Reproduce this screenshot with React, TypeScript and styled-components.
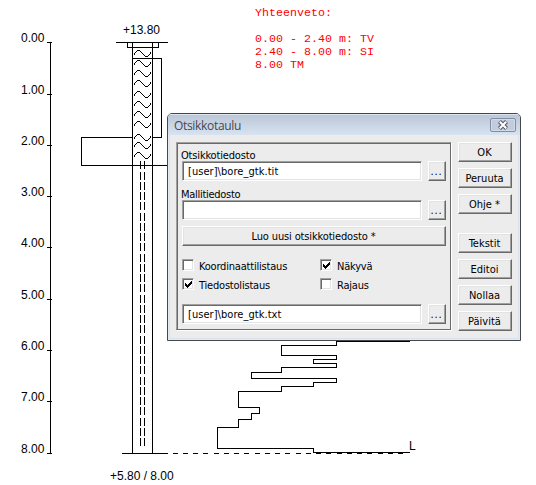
import React from "react";
import styled, { createGlobalStyle } from "styled-components";

const GlobalStyle = createGlobalStyle`
  *, *::before, *::after { box-sizing: border-box; }
  body { margin: 0; background: #fff; overflow: hidden; }
`;

const Workspace = styled.main`
  position: relative;
  width: 536px;
  height: 485px;
  background: #fff;
  overflow: hidden;
`;

const Drawing = styled.svg`
  display: block;
  font: 12px "Liberation Sans", Arial, sans-serif;
  fill: #000;
`;

const Lines = styled.g`
  fill: none;
  stroke: #000;
  stroke-width: 1;
  shape-rendering: crispEdges;
`;

const Summary = styled.div`
  position: absolute;
  left: 255px;
  top: 7px;
  font: 11.67px/13px "Liberation Mono", "Courier New", monospace;
  color: #f00;
  white-space: pre;
`;

const SummaryTitle = styled.div`
  margin-bottom: 13px;
`;

const Dialog = styled.section`
  position: absolute;
  left: 167px;
  top: 113px;
  width: 354px;
  height: 228px;
  border: 1px solid #46464c;
  border-radius: 5px 5px 0 0;
  background: #ececec;
  box-shadow: inset 0 0 0 1px #e6ebf2, inset 0 0 0 2px #d7e2f0;
  font: 11px "DejaVu Sans Condensed", "DejaVu Sans", Tahoma, sans-serif;
  font-stretch: condensed;
  color: #000;
  overflow: hidden;
`;

const TitleBar = styled.header`
  display: flex;
  justify-content: space-between;
  height: 21px;
  padding: 0 4px 0 6px;
  background: linear-gradient(#bac6d5, #d7e3f1);
  box-shadow: inset 0 1px 0 #dce4ee;
`;

const Title = styled.h1`
  margin: 0;
  font: 12px/23px "Open Sans", "Noto Sans", sans-serif;
  letter-spacing: -0.32px;
  color: #45484e;
`;

const CloseButton = styled.button`
  display: grid;
  place-items: center;
  width: 26px;
  height: 14px;
  margin-top: 4px;
  padding: 0;
  border: 1px solid #838ba6;
  border-radius: 2px;
  background: #c1cddd;
  box-shadow: inset 0 0 0 1px #d2dce8;
`;

const Body = styled.div`
  display: flex;
  gap: 7px;
  padding: 7px 8px 0;
`;

const sunken = `
  border: 1px solid;
  border-color: #a0a0a0 #fff #fff #a0a0a0;
  box-shadow: inset 1px 1px 0 #696969, inset -1px -1px 0 #e3e3e3;
`;

const Panel = styled.div`
  display: flex;
  flex-direction: column;
  width: 275px;
  height: 188px;
  padding: 5px 4px 0 5px;
  border: 1px solid;
  border-color: #a0a0a0 #696969 #696969 #a0a0a0;
  box-shadow: inset 1px 1px 0 #696969, 1px 1px 0 #fff;
`;

const FieldLabel = styled.label<{ $spacing?: number }>`
  height: 13px;
  line-height: 15px;
  letter-spacing: ${(p) => p.$spacing ?? -0.17}px;
  margin-left: -1px;
`;

const FieldRow = styled.div<{ $after: number }>`
  display: flex;
  justify-content: space-between;
  height: 20px;
  margin-bottom: ${(p) => p.$after}px;
`;

const PathInput = styled.input`
  width: 240px;
  height: 20px;
  padding: 1px 4px 0 5px;
  ${sunken}
  border-radius: 0;
  outline: 0;
  background: #fff;
  font: inherit;
  letter-spacing: 0.05px;
  color: #000;
`;

const PushButton = styled.button<{ $width: number; $top?: number; $spacing?: number }>`
  display: block;
  flex: none;
  width: ${(p) => p.$width}px;
  height: 20px;
  margin: ${(p) => p.$top ?? 0}px 0 0;
  padding: 2px 1px 0 0;
  border: 1px solid;
  border-color: #fff #696969 #696969 #fff;
  box-shadow: inset -1px -1px 0 #a0a0a0, inset 1px 1px 0 #e3e3e3;
  background: #ececec;
  font: inherit;
  line-height: 16px;
  letter-spacing: ${(p) => p.$spacing ?? 0}px;
  color: #000;
  text-align: center;
  white-space: nowrap;
`;

const Options = styled.div`
  display: grid;
  grid-template-columns: 138px 1fr;
  grid-auto-rows: 19px;
  margin: 13px 0 7px;
  height: 38px;
`;

const Option = styled.label`
  display: flex;
  gap: 5px;
  line-height: 16px;
  letter-spacing: -0.2px;
`;

const CheckMark = styled.span`
  width: 12px;
  height: 12px;
  ${sunken}
  background: #fff;

  svg { display: block; }
`;

const Actions = styled.div`
  display: flex;
  flex-direction: column;
  gap: 6px;
  width: 54px;
`;

type Point = [number, number];

const toPath = (points: Point[]) =>
  points.map(([x, y], i) => `${i ? "L" : "M"}${x + 0.5} ${y + 0.5}`).join("");

const ticks = [42, 94, 145, 196, 247, 299, 350, 401, 453];
const waves = [53, 63, 73, 83, 94, 104, 114, 124, 137, 145, 155];
const siltDashes = Array.from({ length: 28 }, (_, i) => Math.round(161.3 + i * 10.25));
const baseDashes = Array.from({ length: 23 }, (_, i) => Math.round(172.7 + i * 10.24));

// One wave of the peat hatch as horizontal runs: x, offset from the centre, length.
const waveRuns = [
  [134, 1, 1], [134, 0, 1], [135, -1, 1], [136, -2, 1], [137, -3, 3],
  [140, -2, 1], [141, -1, 1], [142, 0, 1], [143, 1, 1], [144, 2, 1],
  [145, 3, 3], [148, 2, 1], [149, 1, 1], [150, 0, 1], [150, -1, 1],
];

const wavePath = (y: number) =>
  waveRuns.map(([x, dy, length]) => `M${x} ${y + dy + 0.5}h${length}`).join("");

const resistance: Point[] = [
  [409, 341], [336, 341], [336, 345], [281, 345], [281, 355], [336, 355],
  [336, 359], [313, 359], [313, 363], [336, 363], [336, 367], [281, 367],
  [281, 372], [251, 372], [251, 378], [336, 378], [336, 382], [313, 382],
  [313, 386], [281, 386], [281, 391], [238, 391], [238, 407], [259, 407],
  [259, 413], [251, 413], [251, 419], [238, 419], [238, 427], [217, 427],
  [217, 448], [313, 448], [313, 452], [409, 452],
];

function BoreDrawing() {
  return (
    <Drawing width="536" height="485" viewBox="0 0 536 485">
      <Lines>
        <path d="M50.5 42V454" />
        {ticks.map((y) => <path key={y} d={`M47 ${y + 0.5}H52`} />)}
        <path d="M116 42.5H168M127.5 42V47.5H158.5V42" />
        <path d="M132.5 42V453M152.5 42V453M122 453.5H168" />
        <path d="M132 58.5H161.5V137.5H152M132 137.5H81.5V165.5H168" />
        {siltDashes.map((y) => <path key={y} d={`M140.5 ${y}v8M144.5 ${y}v8`} />)}
        {baseDashes.map((x) => <path key={x} d={`M${x} 453.5h5`} />)}
        <path d={toPath(resistance)} />
        {waves.map((y) => <path key={y} d={wavePath(y)} />)}
      </Lines>
      {ticks.map((y, i) => <text key={y} x="21" y={y}>{`${i}.00`}</text>)}
      <text x="123" y="34">+13.80</text>
      <text x="110" y="480">+5.80 / 8.00</text>
      <text x="409" y="450">L</text>
    </Drawing>
  );
}

function Check({ label, on = false }: { label: string; on?: boolean }) {
  return (
    <Option>
      <CheckMark>
        {on && (
          <svg width="10" height="10" viewBox="0 0 10 10">
            <path d="M2 4V7L4 9L9 4V1L4 6Z" fill="#000" shapeRendering="crispEdges" />
          </svg>
        )}
      </CheckMark>
      {label}
    </Option>
  );
}

export default function App() {
  return (
    <Workspace>
      <GlobalStyle />
      <BoreDrawing />
      <Summary>
        <SummaryTitle>Yhteenveto:</SummaryTitle>
        <div>0.00 - 2.40 m: TV</div>
        <div>2.40 - 8.00 m: SI</div>
        <div>8.00 TM</div>
      </Summary>
      <Dialog>
        <TitleBar>
          <Title>Otsikkotaulu</Title>
          <CloseButton aria-label="Sulje">
            <svg width="12" height="10" viewBox="0 0 12 10">
              <path d="M2.5 1.5L9.5 8.5M9.5 1.5L2.5 8.5" stroke="#50545f" strokeWidth="4.2" />
              <path d="M2.8 1.8L9.2 8.2M9.2 1.8L2.8 8.2" stroke="#fff" strokeWidth="2.2" />
            </svg>
          </CloseButton>
        </TitleBar>
        <Body>
          <Panel>
            <FieldLabel>Otsikkotiedosto</FieldLabel>
            <FieldRow $after={6}>
              <PathInput defaultValue="[user]\bore_gtk.tit" />
              <PushButton $width={18} $spacing={0.8}>...</PushButton>
            </FieldRow>
            <FieldLabel $spacing={-0.28}>Mallitiedosto</FieldLabel>
            <FieldRow $after={6}>
              <PathInput />
              <PushButton $width={18} $spacing={0.8}>...</PushButton>
            </FieldRow>
            <PushButton $width={264} $spacing={-0.14}>Luo uusi otsikkotiedosto *</PushButton>
            <Options>
              <Check label="Koordinaattilistaus" />
              <Check label="Näkyvä" on />
              <Check label="Tiedostolistaus" on />
              <Check label="Rajaus" />
            </Options>
            <FieldRow $after={0}>
              <PathInput defaultValue="[user]\bore_gtk.txt" />
              <PushButton $width={18} $spacing={0.8}>...</PushButton>
            </FieldRow>
          </Panel>
          <Actions>
            <PushButton $width={54}>OK</PushButton>
            <PushButton $width={54}>Peruuta</PushButton>
            <PushButton $width={54}>Ohje *</PushButton>
            <PushButton $width={54} $top={13}>Tekstit</PushButton>
            <PushButton $width={54}>Editoi</PushButton>
            <PushButton $width={54}>Nollaa</PushButton>
            <PushButton $width={54}>Päivitä</PushButton>
          </Actions>
        </Body>
      </Dialog>
    </Workspace>
  );
}
